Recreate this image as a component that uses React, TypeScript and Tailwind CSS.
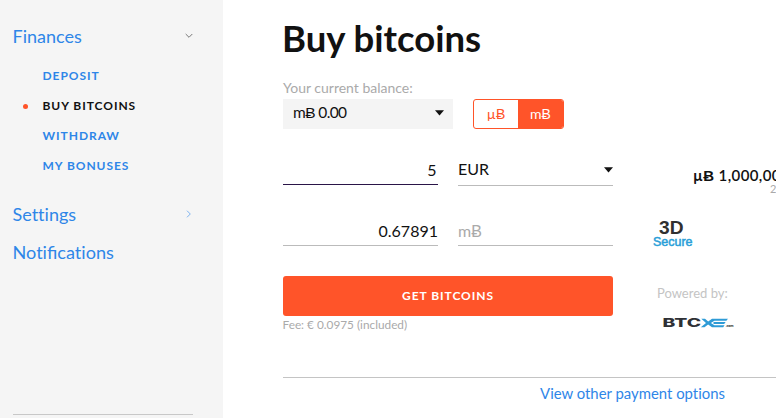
import type { ReactNode } from "react";

const subItems = [
  { label: "Deposit", active: false },
  { label: "Buy bitcoins", active: true },
  { label: "Withdraw", active: false },
  { label: "My bonuses", active: false },
];

function Caret() {
  return (
    <svg width="9" height="6" viewBox="0 0 9 6" className="shrink-0">
      <path d="M0 0.2h9L4.5 5.4z" fill="#111" />
    </svg>
  );
}

function Unit({ prefix }: { prefix: string }) {
  return (
    <span>
      {prefix}
      <span className="font-['Liberation_Sans',sans-serif]">Ƀ</span>
    </span>
  );
}

function Field({ children, className }: { children: ReactNode; className: string }) {
  return (
    <div className={`flex w-[155px] items-center border-b text-base leading-5 ${className}`}>
      {children}
    </div>
  );
}

function Sidebar() {
  return (
    <aside className="flex w-[223px] shrink-0 flex-col bg-[#f5f5f5] pl-[12.5px] text-[#2e86e8]">
      <div className="mt-[24px] flex h-6 w-[180.5px] items-center justify-between text-[18px]">
        <a>Finances</a>
        <svg width="8" height="6" viewBox="0 0 8 6" fill="none" stroke="#777">
          <path d="M0.7 1L4 4.3L7.3 1" />
        </svg>
      </div>
      <ul className="mt-[13px]">
        {subItems.map((item) => (
          <li
            key={item.label}
            className={`flex h-[30px] items-center text-[12px] font-bold tracking-[0.95px] uppercase ${
              item.active ? "text-[#111]" : ""
            }`}
          >
            <span className="flex w-[30px] pl-[10.5px]">
              {item.active && <span className="mt-px size-[5px] rounded-full bg-[#ff5429]" />}
            </span>
            {item.label}
          </li>
        ))}
      </ul>
      <div className="mt-[21px] flex h-6 w-[179.5px] items-center justify-between text-[18px]">
        <a>Settings</a>
        <svg width="6" height="8" viewBox="0 0 6 8" fill="none" stroke="#7db2ef">
          <path d="M1 0.7L4.3 4L1 7.3" />
        </svg>
      </div>
      <a className="mt-[14px] block h-6 text-[18.1px] leading-6">
        Noti<span className="[font-variant-ligatures:common-ligatures]">fi</span>cations
      </a>
      <div className="mt-[150px] w-[180px] border-t border-[#c8c8c8]" />
    </aside>
  );
}

function SecureLogo() {
  return (
    <svg width="42" height="28" viewBox="0 0 42 28" className="overflow-visible font-['Liberation_Sans',Arial,sans-serif]">
      <text x="6" y="13" fontSize="18.5" fontWeight="700" fill="#303030" textLength="24.5" lengthAdjust="spacingAndGlyphs">
        3D
      </text>
      <text x="0" y="25" fontSize="12" fill="#2a9fd8" stroke="#2a9fd8" strokeWidth="0.5" textLength="39.5" lengthAdjust="spacingAndGlyphs">
        Secure
      </text>
    </svg>
  );
}

function BtcxeLogo() {
  return (
    <svg width="72" height="12" viewBox="0 0 72 12" className="overflow-visible font-['Inter',sans-serif]">
      <text x="-0.5" y="10.3" fontSize="11.8" fontWeight="800" fill="#2e3035" textLength="38.5" lengthAdjust="spacingAndGlyphs">
        BTC
      </text>
      <g fill="#2e9bd6">
        <path d="M38.3 1.7h3.7l3.2 2.8 3.8-2.8H65l-1.6 2H51.4l-3.5 2.3 3.5 2.3h10.1l-1.3 2H49l-3.9-2.9-3.6 2.9H37.8l5.2-4.4z" />
        <path d="M50.5 5.1H62.6l-1.4 1.8H50.5z" />
      </g>
      <text x="62.5" y="10.4" fontSize="3.6" fontWeight="700" fill="#2e3035" textLength="8">
        .com
      </text>
    </svg>
  );
}

export default function App() {
  return (
    <div className="flex h-[418px] w-[776px] overflow-hidden bg-white font-['Lato',sans-serif] text-[#111] [font-variant-ligatures:none]">
      <Sidebar />
      <main className="min-w-0 flex-1 overflow-hidden pl-[60px]">
        <h1 className="mt-[15px] -ml-px text-[36.5px] leading-[46px] font-bold">Buy bitcoins</h1>
        <p className="mt-[18px] text-[14px] leading-[18px] text-[#aaa]">Your current balance:</p>

        <div className="mt-[2px] flex h-[30px] gap-5">
          <div className="flex w-[170px] items-center justify-between bg-[#f4f4f4] pr-[9px] pb-[3px] pl-[10px]">
            <span className="text-[15.5px] tracking-[-0.6px]">
              <Unit prefix="m" /> 0.00
            </span>
            <Caret />
          </div>
          <div className="flex w-[91px] overflow-hidden rounded-[3px] border border-[#ff5429] text-[14px]">
            <button className="flex-1 text-[#ff5429]">
              <Unit prefix="µ" />
            </button>
            <button className="w-[45px] bg-[#ff5429] text-white">
              <Unit prefix="m" />
            </button>
          </div>
        </div>

        <div className="mt-[27px] flex">
          <div>
            <div className="flex gap-5">
              <Field className="h-[29px] justify-end border-[#2a1548] pr-[1.5px]">5</Field>
              <Field className="h-[30px] justify-between border-[#bbb] pb-[2px]">
                <span className="pb-[2px]">EUR</span>
                <Caret />
              </Field>
            </div>
            <div className="mt-[30px] flex gap-5">
              <Field className="h-[30px] justify-end border-[#bbb]">0.67891</Field>
              <Field className="h-[30px] border-[#bbb] pt-[2px] text-[#aaa]">
                <Unit prefix="m" />
              </Field>
            </div>
            <button className="mt-[30px] block h-10 w-[330px] rounded-[3px] bg-[#ff5429] text-[12px] font-bold tracking-[0.95px] text-white uppercase">
              Get bitcoins
            </button>
            <p className="mt-px -ml-[0.5px] text-[11.8px] leading-4 text-[#aaa]">Fee: € 0.0975 (included)</p>
          </div>

          <div className="ml-10 whitespace-nowrap">
            <p className="mt-[11px] ml-[40px] text-[15px] leading-4 font-bold tracking-[0.4px]">
              <Unit prefix="µ" /> <span className="font-semibold">1,000,000</span>
            </p>
            <p className="ml-[117px] text-[11px] leading-[10px] text-[#aaa]">2</p>
            <div className="mt-[27px]">
              <SecureLogo />
            </div>
            <p className="mt-[36px] ml-1 text-[13px] leading-4 text-[#c4c4c4]">Powered by:</p>
            <div className="mt-[16px] ml-[10px]">
              <BtcxeLogo />
            </div>
          </div>
        </div>

        <div className="mt-[44px] w-[699px] border-t border-[#c4c4c4] pt-[5px] text-center text-[14.9px] leading-5">
          <a className="text-[#2e86e8]">View other payment options</a>
        </div>
      </main>
    </div>
  );
}
